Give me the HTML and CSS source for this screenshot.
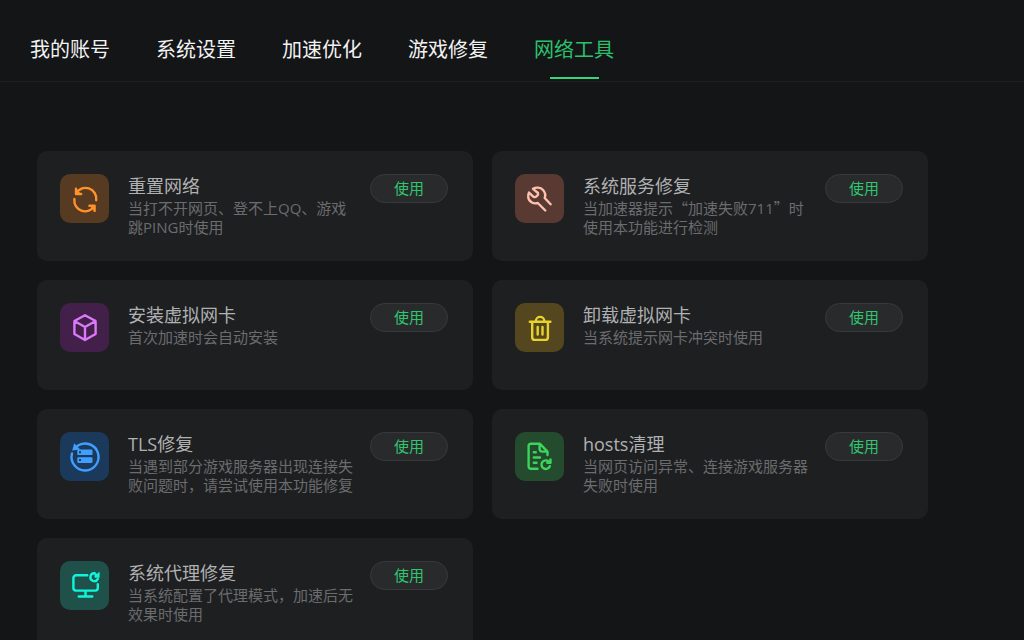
FILE: index.html
```html
<!DOCTYPE html>
<html lang="zh-CN">
<head>
<meta charset="utf-8">
<meta name="viewport" content="width=device-width, initial-scale=1">
<title>网络工具</title>
<link rel="stylesheet" href="styles.css">
</head>
<body>
<header class="topbar">
  <nav class="tabs">
    <a class="tab" href="#account">我的账号</a>
    <a class="tab" href="#system">系统设置</a>
    <a class="tab" href="#boost">加速优化</a>
    <a class="tab" href="#repair">游戏修复</a>
    <a class="tab tab-active" href="#network" aria-current="page">网络工具</a>
  </nav>
</header>
<main class="tools">
  <article class="card">
    <svg class="icon icon-orange" viewBox="0 0 49 49" aria-hidden="true">
      <path d="M16 14.800v5.200h5.200M16 19.600A10.800 10.800 0 0 1 36.200 26.200M14.400 25a10.800 10.800 0 0 0 20 7M29.400 31.700h5.200v5.200"/>
      <path class="solid" d="M16 14.800v5.200h5.200ZM29.400 31.700h5.200v5.200Z"/>
    </svg>
    <div class="info">
      <h2 class="title">重置网络</h2>
      <p class="desc">当打不开网页、登不上QQ、游戏<br>跳PING时使用</p>
    </div>
    <button class="use" type="button">使用</button>
  </article>
  <article class="card">
    <svg class="icon icon-salmon" viewBox="0 0 49 49" aria-hidden="true">
      <path d="M30.3 36.500 22.800 29C18.500 30.300 13.500 27.500 13.200 23c-.1-1.800.1-3.200.8-4.400l4.500 4.200c2 1.200 5.400-1.600 4.500-3.800L18 14.800c3-1.900 7.500-1.600 10 1.200 2.300 2.500 2.700 5.300 1.700 8l5.900 6.300"/>
    </svg>
    <div class="info">
      <h2 class="title">系统服务修复</h2>
      <p class="desc">当加速器提示<span class="wide">“</span>加速失败711<span class="wide">”</span>时<br>使用本功能进行检测</p>
    </div>
    <button class="use" type="button">使用</button>
  </article>
  <article class="card">
    <svg class="icon icon-purple" viewBox="0 0 49 49" aria-hidden="true">
      <path d="M25 12.300 35.600 18v13L25 37 14.400 31V18ZM14.400 18 25 24l10.600-6M25 24v13"/>
    </svg>
    <div class="info">
      <h2 class="title">安装虚拟网卡</h2>
      <p class="desc">首次加速时会自动安装</p>
    </div>
    <button class="use" type="button">使用</button>
  </article>
  <article class="card">
    <svg class="icon icon-yellow" viewBox="0 0 49 49" aria-hidden="true">
      <path d="M14.800 18.700h20.600M17.200 19v15.200a2.700 2.700 0 0 0 2.700 2.700h10.300a2.700 2.700 0 0 0 2.700-2.700V19M20.800 18.500c0-6.200 8.600-6.200 8.600 0M22.700 24v7.500M27.500 24v7.500"/>
    </svg>
    <div class="info">
      <h2 class="title">卸载虚拟网卡</h2>
      <p class="desc">当系统提示网卡冲突时使用</p>
    </div>
    <button class="use" type="button">使用</button>
  </article>
  <article class="card">
    <svg class="icon icon-blue" viewBox="0 0 49 49" aria-hidden="true">
      <path d="M12 21.500A13.500 13.500 0 1 0 17.500 13.800"/>
      <path class="solid" d="M14.200 11.200 20.300 17.600 12.200 18.600Z"/>
      <rect class="solid" x="17.300" y="17.500" width="15.200" height="5.600" rx="1.200"/>
      <rect class="solid" x="17.300" y="25.300" width="15.200" height="5.600" rx="1.200"/>
      <path class="hole" d="M19 19.300h2v2h-2zM19 27.100h2v2h-2z"/>
    </svg>
    <div class="info">
      <h2 class="title">TLS修复</h2>
      <p class="desc">当遇到部分游戏服务器出现连接失<br>败问题时，请尝试使用本功能修复</p>
    </div>
    <button class="use" type="button">使用</button>
  </article>
  <article class="card">
    <svg class="icon icon-green" viewBox="0 0 49 49" aria-hidden="true">
      <path d="M22.500 36.800H15.800a2.200 2.200 0 0 1-2.200-2.200V14a2.200 2.200 0 0 1 2.200-2.200H25l7.500 7.800v3.400M24.600 12v4.800a2.800 2.800 0 0 0 2.800 2.800h5M18.800 20.200h2M18.800 25.500H25M18.800 30.700h2.700M34.200 30a4.300 4.300 0 1 0 .6 4.200M35.500 27.500v3.200h-3.200"/>
      <path class="solid" d="M36 27.500v3.700h-4Z"/>
    </svg>
    <div class="info">
      <h2 class="title">hosts清理</h2>
      <p class="desc">当网页访问异常、连接游戏服务器<br>失败时使用</p>
    </div>
    <button class="use" type="button">使用</button>
  </article>
  <article class="card">
    <svg class="icon icon-teal" viewBox="0 0 49 49" aria-hidden="true">
      <path d="M27.300 14.300H16a2.600 2.600 0 0 0-2.600 2.600V27a2.600 2.600 0 0 0 2.600 2.600h19.200A2.600 2.600 0 0 0 37.800 27v-3.800M25.500 30v5.300M18.700 35.500h13.600M34.800 12.300a3.900 3.900 0 1 0 3 5.600"/>
      <path class="solid" d="M39.600 10.800v6h-5.100V12.200l2.600.6Z"/>
    </svg>
    <div class="info">
      <h2 class="title">系统代理修复</h2>
      <p class="desc">当系统配置了代理模式，加速后无<br>效果时使用</p>
    </div>
    <button class="use" type="button">使用</button>
  </article>
</main>
</body>
</html>
```
FILE: styles.css
```css
* {
  box-sizing: border-box;
}

body {
  margin: 0;
  background: #141517;
  color: #b0b1b2;
  font-family: "Open Sans", "Noto Sans CJK SC", sans-serif;
}

.topbar {
  padding: 0 30px;
  border-bottom: 1px solid #1d1e20;
}

.tabs {
  display: flex;
  gap: 46px;
}

.tab {
  display: flex;
  flex-direction: column;
  align-items: center;
  gap: 12px;
  padding: 35px 0 2px;
  color: #f2f2f2;
  font-size: 20px;
  line-height: 30px;
  text-decoration: none;
  white-space: nowrap;
}

.tab::after {
  content: "";
  width: 49px;
  height: 2px;
}

.tab-active {
  color: #2bc16b;
}

.tab-active::after {
  background: #36d57c;
}

.tools {
  display: grid;
  grid-template-columns: 1fr 1fr;
  gap: 19px;
  padding: 69px 96px 19px 37px;
}

.card {
  display: flex;
  align-items: flex-start;
  min-height: 110px;
  padding: 23px 25px 23px 23px;
  border-radius: 10px;
  background: #1e1f21;
}

.icon {
  flex: none;
  width: 49px;
  height: 49px;
  margin-right: 19px;
  border-radius: 10px;
  fill: none;
  stroke: currentColor;
  stroke-width: 2.4;
  stroke-linecap: round;
  stroke-linejoin: round;
}

.icon .solid {
  fill: currentColor;
  stroke: none;
}

.icon .hole {
  fill: #1b3a5b;
  stroke: none;
}

.icon-orange { background: #563a21; color: #ff922b; }
.icon-salmon { background: #583a32; color: #ffc0ae; }
.icon-purple { background: #43204a; color: #db78fb; }
.icon-yellow { background: #54461e; color: #e6d32c; }
.icon-blue { background: #1b3a5b; color: #409eff; }
.icon-green { background: #254b2e; color: #3bd45c; }
.icon-teal { background: #20504a; color: #0ff5dc; }

.info {
  flex: 1;
  min-width: 0;
}

.title {
  margin: 0;
  font-size: 18px;
  font-weight: 400;
  line-height: 25px;
}

.desc {
  margin: 0;
  color: #6b6c6e;
  font-size: 15px;
  line-height: 19px;
  white-space: nowrap;
}

.wide {
  font-family: "Noto Sans CJK SC", sans-serif;
  line-height: 1;
}

.use {
  flex: none;
  width: 78px;
  height: 29px;
  padding: 0;
  border: 1px solid #38393b;
  border-radius: 15px;
  background: #292a2c;
  color: #2fc66f;
  font: inherit;
  font-size: 15px;
  line-height: 27px;
}
```
